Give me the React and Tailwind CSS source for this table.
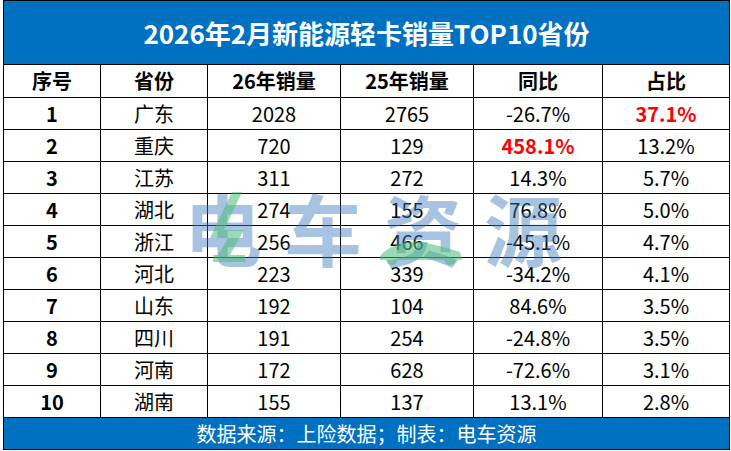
import React from "react";

const rows = [
  ["1", "广东", "2028", "2765", "-26.7%", "37.1%", false, true],
  ["2", "重庆", "720", "129", "458.1%", "13.2%", true, false],
  ["3", "江苏", "311", "272", "14.3%", "5.7%", false, false],
  ["4", "湖北", "274", "155", "76.8%", "5.0%", false, false],
  ["5", "浙江", "256", "466", "-45.1%", "4.7%", false, false],
  ["6", "河北", "223", "339", "-34.2%", "4.1%", false, false],
  ["7", "山东", "192", "104", "84.6%", "3.5%", false, false],
  ["8", "四川", "191", "254", "-24.8%", "3.5%", false, false],
  ["9", "河南", "172", "628", "-72.6%", "3.1%", false, false],
  ["10", "湖南", "155", "137", "13.1%", "2.8%", false, false],
];

const headers = ["序号", "省份", "26年销量", "25年销量", "同比", "占比"];

export default function App() {
  return (
    <div
      className="relative w-[731px] h-[451px] bg-white pl-[3px]"
      style={{ fontFamily: '"Noto Sans CJK SC", "Noto Sans", sans-serif' }}
    >
      <div className="grid grid-cols-[96px_106px_132px_132px_128px_126px] gap-px bg-black p-px w-[727px] text-black">
        <div className="col-span-6 h-[63px] bg-[#0070c0] flex items-center justify-center text-white font-bold text-[26px] leading-none">
          2026年2月新能源轻卡销量TOP10省份
        </div>
        {headers.map((h) => (
          <div
            key={h}
            className="h-[32px] bg-white flex items-center justify-center font-bold text-[20px] leading-none"
          >
            {h}
          </div>
        ))}
        {rows.map((r) => (
          <React.Fragment key={r[0]}>
            <div className="h-[31px] bg-white flex items-center justify-center font-bold text-[20px] leading-none">
              {r[0]}
            </div>
            <div className="h-[31px] bg-white flex items-center justify-center text-[20px] leading-none">
              {r[1]}
            </div>
            <div className="h-[31px] bg-white flex items-center justify-center text-[20px] leading-none">
              {r[2]}
            </div>
            <div className="h-[31px] bg-white flex items-center justify-center text-[20px] leading-none">
              {r[3]}
            </div>
            <div
              className={
                r[6]
                  ? "h-[31px] bg-white flex items-center justify-center text-[20px] leading-none font-bold text-[#ff0000]"
                  : "h-[31px] bg-white flex items-center justify-center text-[20px] leading-none"
              }
            >
              {r[4]}
            </div>
            <div
              className={
                r[7]
                  ? "h-[31px] bg-white flex items-center justify-center text-[20px] leading-none font-bold text-[#ff0000]"
                  : "h-[31px] bg-white flex items-center justify-center text-[20px] leading-none"
              }
            >
              {r[5]}
            </div>
          </React.Fragment>
        ))}
        <div className="col-span-6 h-[31px] bg-[#0070c0] flex items-center justify-center text-white text-[20px] leading-none">
          数据来源：上险数据；制表：电车资源
        </div>
      </div>

      {/* watermark */}
      <div className="absolute left-[184px] top-[186px] w-[380px] h-[82px] pointer-events-none">
        <div className="absolute inset-0 flex items-center gap-[22px] text-[78px] font-bold leading-none text-[#3f7bc0] opacity-45">
          <span>电</span>
          <span>车</span>
          <span>资</span>
          <span>源</span>
        </div>
        <svg className="absolute inset-0" width="380" height="82" viewBox="0 0 380 82">
          <g opacity="0.55" fill="#4dbb7a">
            <polygon points="48,6 58,6 40,44 60,44 42,76 30,76 44,52 26,52" />
            <rect x="29" y="69" width="32" height="7" />
            <path d="M196 70 C 206 58, 226 54, 236 56 C 250 58, 262 62, 276 66 L 278 74 L 196 74 Z" />
            <circle cx="208" cy="73" r="6" />
            <circle cx="266" cy="73" r="6" />
          </g>
        </svg>
      </div>
    </div>
  );
}
